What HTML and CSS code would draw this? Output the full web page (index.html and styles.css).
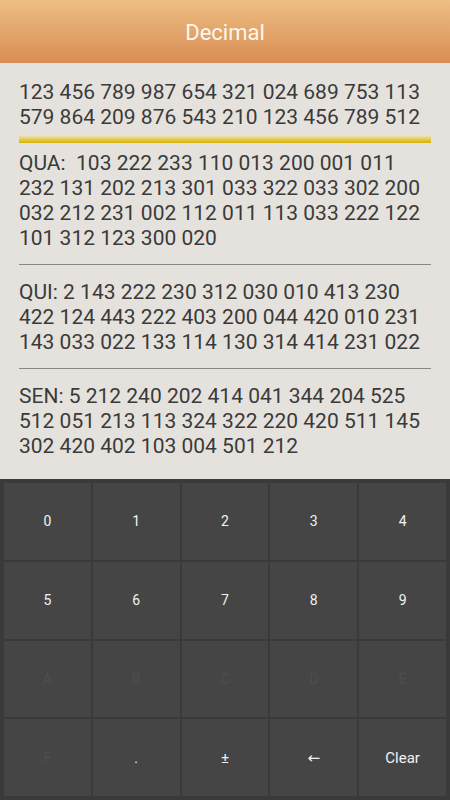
FILE: index.html
```html
<!DOCTYPE html>
<html lang="en">
<head>
  <meta charset="UTF-8" />
  <meta name="viewport" content="width=device-width, initial-scale=1.0"/>
  <title>Decimal</title>
  <link rel="stylesheet" href="styles.css">
</head>
<body>
  <header class="title-bar">Decimal</header>

  <main class="results">
    <p class="value">123 456 789 987 654 321 024 689 753 113 579 864 209 876 543 210 123 456 789 512</p>
    <div class="highlight"></div>
    <p class="value">QUA:&nbsp; 103 222 233 110 013 200 001 011 232 131 202 213 301 033 322 033 302 200 032 212 231 002 112 011 113 033 222 122 101 312 123 300 020</p>
    <hr class="divider">
    <p class="value">QUI: 2 143 222 230 312 030 010 413 230 422 124 443 222 403 200 044 420 010 231 143 033 022 133 114 130 314 414 231 022</p>
    <hr class="divider">
    <p class="value">SEN: 5 212 240 202 414 041 344 204 525 512 051 213 113 324 322 220 420 511 145 302 420 402 103 004 501 212</p>
  </main>

  <section class="keypad">
    <button class="key">0</button>
    <button class="key">1</button>
    <button class="key">2</button>
    <button class="key">3</button>
    <button class="key">4</button>
    <button class="key">5</button>
    <button class="key">6</button>
    <button class="key">7</button>
    <button class="key">8</button>
    <button class="key">9</button>
    <button class="key off">A</button>
    <button class="key off">B</button>
    <button class="key off">C</button>
    <button class="key off">D</button>
    <button class="key off">E</button>
    <button class="key off">F</button>
    <button class="key">.</button>
    <button class="key sign">±</button>
    <button class="key back">←</button>
    <button class="key clear">Clear</button>
  </section>
</body>
</html>
```

FILE: styles.css
```css
html, body {
  margin: 0;
  height: 100%;
}
body {
  display: flex;
  flex-direction: column;
  background-color: #e5e2dd;
  color: #3a3a3a;
  font-family: Roboto, "Noto Sans", sans-serif;
}
.title-bar {
  height: 63px;
  padding-top: 2px;
  box-sizing: border-box;
  display: flex;
  align-items: center;
  justify-content: center;
  background: linear-gradient(to bottom, #edbe83, #d98d54);
  color: #fdf7f0;
  font-size: 22px;
  flex-shrink: 0;
}
.results {
  flex: 1;
  padding: 17px 19px 0;
}
.value {
  margin: 0;
  font-size: 21px;
  line-height: 25px;
}
.highlight {
  height: 7px;
  margin: 6px 0 8px;
  background: linear-gradient(to bottom, #eee2a6, #d6b200);
}
.divider {
  border: none;
  height: 1px;
  background-color: #8a8784;
  margin: 13px 0 15px;
}
.keypad {
  height: 313px;
  flex-shrink: 0;
  padding: 4px;
  display: grid;
  grid-template-columns: repeat(5, 1fr);
  grid-template-rows: repeat(4, 1fr);
  gap: 2px;
  background-color: #3a3a3a;
}
.key {
  border: none;
  margin: 0;
  padding: 0;
  background-color: #454545;
  color: #f2f2f2;
  font-family: Roboto, "Noto Sans", sans-serif;
  font-size: 14px;
}
.key.off {
  color: #4e4e4e;
}
.key.sign {
  font-size: 15px;
}
.key.back {
  font-family: "DejaVu Sans", sans-serif;
  font-size: 15px;
}
.key.clear {
  font-size: 15px;
}
```
